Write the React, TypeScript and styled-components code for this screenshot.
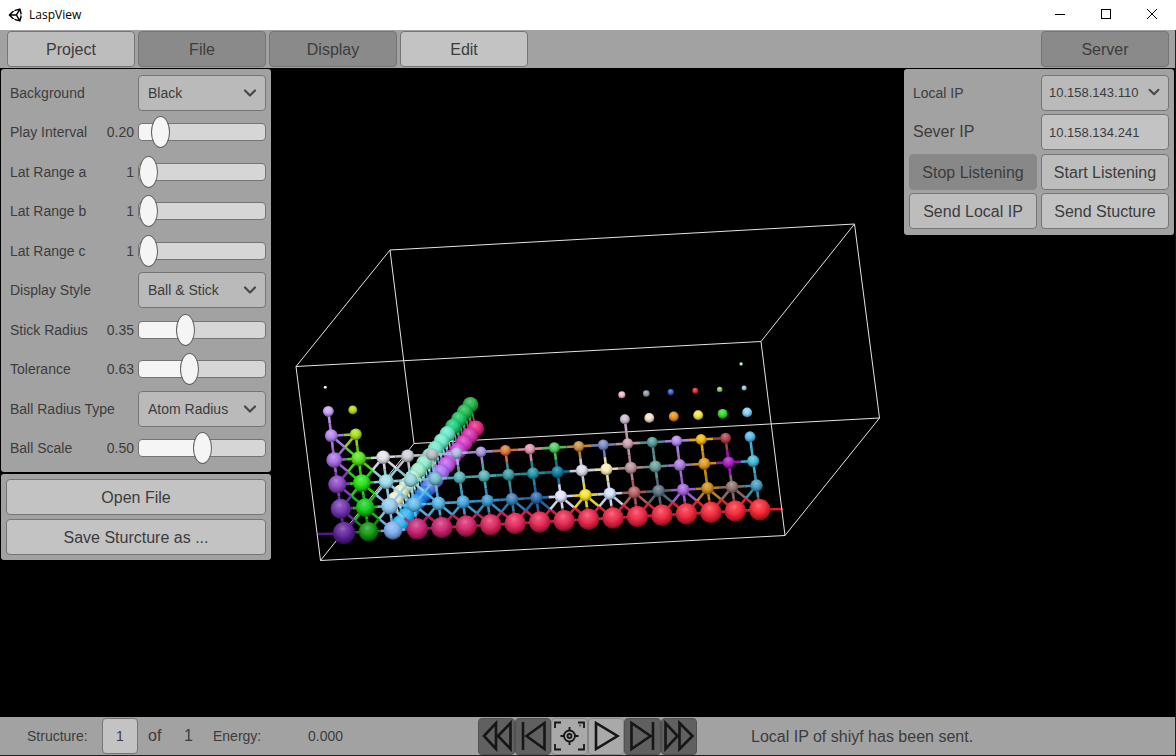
import React, { useId, useState } from "react";
import styled, { createGlobalStyle } from "styled-components";
import { ChevronDown } from "lucide-react";
import { FaUnity } from "react-icons/fa";

const GlobalStyle = createGlobalStyle`
  *, *::before, *::after { box-sizing: border-box; }
  body { margin: 0; background: #000; }
  button, input, select { font-family: inherit; color: inherit; margin: 0; }
`;

const Shell = styled.div`
  min-height: 100vh;
  display: grid;
  grid-template-rows: 30px 38px 1fr 39px;
  font-family: "Liberation Sans", Arial, sans-serif;
  font-size: 14px;
  color: #3c3c3c;
`;

/* ---------- window title bar ---------- */

const TitleBar = styled.header`
  display: flex;
  align-items: center;
  padding: 0 1px 0 8px;
  background: #fff;
  color: #000;
`;

const AppTitle = styled.h1`
  display: flex;
  align-items: center;
  gap: 5px;
  margin: 0;
  flex: 1;
  font: 400 12px/16px "Open Sans", "Noto Sans", sans-serif;
`;

const WindowButton = styled.button`
  width: 46px;
  height: 28px;
  padding: 0;
  border: 0;
  background: none;
  display: grid;
  place-items: center;
`;

/* ---------- shared controls ---------- */

type Tone = "normal" | "bright" | "dark" | "disabled";
const toneFill: Record<Tone, string> = {
  normal: "#bdbdbd",
  bright: "#c3c3c3",
  dark: "#8a8a8a",
  disabled: "#888888",
};

const Button = styled.button<{ $tone?: Tone }>`
  width: 100%;
  height: 36px;
  padding: 2px 0 0;
  border: 1px solid ${(p) => (p.$tone === "disabled" ? "#888888" : "#757575")};
  border-radius: 4px;
  background: ${(p) => toneFill[p.$tone ?? "normal"]};
  color: #3c3c3c;
  font-size: 16px;
  line-height: 20px;
  white-space: nowrap;
`;

const SelectBox = styled.div`
  position: relative;
  height: 36px;

  svg {
    position: absolute;
    top: 8px;
    right: 6px;
    pointer-events: none;
    color: #484848;
  }
`;

const Select = styled.select<{ $small?: boolean }>`
  appearance: none;
  width: 100%;
  height: 36px;
  padding: 0 ${(p) => (p.$small ? "20px 0 7px" : "24px 0 9px")};
  border: 1px solid #757575;
  border-radius: 4px;
  background: #bababa;
  font-size: ${(p) => (p.$small ? 13 : 14)}px;
`;

const TextInput = styled.input`
  width: 100%;
  height: 36px;
  padding: 0 7px;
  border: 1px solid #757575;
  border-radius: 4px;
  background: #c3c3c3;
  font-size: 13px;
`;

const Range = styled.input<{ $fill: number }>`
  appearance: none;
  display: block;
  width: 100%;
  height: 32px;
  background: none;

  &::-webkit-slider-runnable-track {
    height: 18px;
    border: 1px solid #757575;
    border-radius: 4px;
    background: linear-gradient(
      to right,
      #f5f5f5 ${(p) => p.$fill}%,
      #d6d6d6 ${(p) => p.$fill}%
    );
  }

  &::-webkit-slider-thumb {
    appearance: none;
    width: 19px;
    height: 32px;
    margin-top: -8px;
    border: 1px solid #606060;
    border-radius: 50%;
    background: #f5f5f5;
  }
`;

/* ---------- toolbar ---------- */

const Toolbar = styled.nav`
  display: flex;
  gap: 3px;
  padding: 1px 6px 1px 7px;
  background: #a2a2a2;
  border-right: 1px solid #222;
`;

const Tab = styled(Button)`
  width: 128px;

  &:last-child {
    margin-left: auto;
  }
`;

/* ---------- viewport and its panels ---------- */

const Viewport = styled.main`
  display: grid;
  grid-template-columns: minmax(0, 1fr);
  background: #000;
  border-right: 1px solid #111;
`;

const Scene = styled.svg`
  grid-area: 1 / 1;
  display: block;
  width: 100%;
  height: 100%;
`;

const Panels = styled.div`
  grid-area: 1 / 1;
  display: flex;
  justify-content: space-between;
  align-items: flex-start;
  padding: 1px 1px 0 1px;
`;

const PanelStack = styled.div`
  width: 270px;
  display: grid;
  gap: 2px;
`;

const Panel = styled.section`
  padding: 4px 5px;
  border-radius: 3px;
  background: #a2a2a2;
`;

const SettingList = styled.div`
  display: grid;
  grid-auto-rows: 1fr;
  min-height: 395px;
`;

const SettingRow = styled.div`
  display: grid;
  grid-template-columns: auto 1fr 128px;
  align-items: center;
  column-gap: 4px;
  padding-left: 4px;

  output {
    text-align: right;
  }
`;

const FileActions = styled(Panel)`
  display: grid;
  gap: 4px;
  padding: 5px;
`;

const ServerPanel = styled(Panel)`
  width: 270px;
  min-height: 166px;
  display: grid;
  grid-template-columns: 1fr 1fr;
  grid-auto-rows: 1fr;
  column-gap: 4px;
  align-items: center;
`;

const ServerLabel = styled.label<{ $large?: boolean }>`
  padding-left: 4px;
  font-size: ${(p) => (p.$large ? 16 : 14)}px;
`;

/* ---------- status bar ---------- */

const StatusBar = styled.footer`
  display: grid;
  grid-template-columns: 1fr 219px 1fr;
  align-items: center;
  background: #a2a2a2;
  border-right: 1px solid #222;
  border-bottom: 1px solid #222;
`;

const StructureInfo = styled.div`
  display: grid;
  grid-template-columns: 75px 36px 46px 29px 95px auto;
  align-items: center;
  padding-left: 27px;
`;

const FrameInput = styled(TextInput)`
  padding: 0;
  text-align: center;
  font-size: 14px;
`;

const FrameCount = styled.span<{ $indent?: boolean }>`
  padding-left: ${(p) => (p.$indent ? 10 : 0)}px;
  font-size: 16px;
`;

const Player = styled.div`
  display: grid;
  grid-template-columns: repeat(6, minmax(0, 1fr));
`;

const PlayerButton = styled.button<{ $active?: boolean }>`
  display: flex;
  align-items: center;
  justify-content: center;
  height: 37px;
  padding: 0;
  border: 1px solid ${(p) => (p.$active ? "#888" : "#525252")};
  border-radius: 4px;
  background: ${(p) => (p.$active ? "#a9a9a9" : "#606060")};

  svg {
    flex: none;
    fill: none;
    stroke: #161616;
  }
`;

const Message = styled.p`
  margin: 0;
  padding: 2px 0 0 54px;
  font-size: 16px;
`;

/* ---------- structure drawing ---------- */

type Atom = { x: number; y: number; r: number; c: string };

const ROW_START: [number, number][] = [
  [325.3, 387.3],
  [328.3, 411.3],
  [331.3, 435.7],
  [334.2, 460],
  [337.3, 484.3],
  [340.7, 508.8],
  [344, 533],
];

const sparse = (head: string[], tail: string[]) => [
  ...head,
  ...Array(18 - head.length - tail.length).fill(""),
  ...tail,
];

const ROW_COLORS: string[][] = [
  sparse(["#ffffff"], ["#b0f0f8"]),
  sparse(["#c8a2fc", "#bcd818"], ["#f0bccc", "#909fac", "#3860e4", "#ec2828", "#88d460", "#90cce8"]),
  sparse(["#b484f4", "#a8e018"], ["#ccbcd0", "#f4e0c8", "#f09014", "#f4e844", "#2ce020", "#84d0f4"]),
  ["#a86ce4", "#54e418", "#e4e4f0", "#ced0d8", "#b8b8c4", "#a8b8e4", "#aa94e0", "#e47834", "#e494ac", "#4cd060", "#d0903c", "#788ac8", "#cca0b0", "#549c9c", "#b48cf4", "#f4b808", "#b04048", "#54bcec"],
  ["#8844c4", "#20e410", "#9ce0ec", "#94d4e0", "#70c0d0", "#54b4b8", "#50b2b8", "#389ca4", "#2094a4", "#0880a0", "#d8dce8", "#fff0b8", "#bc9098", "#64a09c", "#a87cdc", "#e09818", "#a818c0", "#40bcdc"],
  ["#7030b0", "#10cc14", "#90ccf4", "#60bcf0", "#50b6e8", "#40a8e0", "#3898d0", "#3c80b8", "#286cb0", "#e4e4ff", "#fce428", "#d4e4ff", "#b86060", "#5c7080", "#a464e4", "#d08c18", "#90746f", "#409cc0"],
  ["#5c1c98", "#0c980c", "#7cb0f4", "#c81e72", "#cc1e6c", "#d42064", "#dc225c", "#e42258", "#e62250", "#e8224c", "#ec2248", "#ee2244", "#f02240", "#f0223c", "#f22238", "#f42234", "#f62232", "#f8222e"],
];

const ROW_RADII: number[][] = [
  [1.5, 1.7],
  [5.4, 4.4, 3.5],
  [6.4, 5.9, 4.9],
  [7.8, 7.3, 6.8, 6.4, 6.1, 5.7, 5.4],
  [9, 8.6, 7.4, 6.9, 6.5, 6.1, 6],
  [10, 9.2, 8.4, 7.2, 6.8, 6.6, 6.2],
  [11, 9.6, 9.2, 10.6],
];

const lattice: (Atom | null)[][] = ROW_COLORS.map((colors, row) =>
  colors.map((c, col) => {
    if (!c) return null;
    const radii = ROW_RADII[row];
    const shrink = row === 1 && col > 12 ? (col - 12) * 0.2 : 0;
    return {
      x: ROW_START[row][0] + col * 24.46,
      y: ROW_START[row][1] - col * 1.37,
      r: radii[Math.min(col, radii.length - 1)] - shrink,
      c,
    };
  })
);

const chain = (x: number, y: number, r: number, colors: string[]): Atom[] =>
  colors.map((c, i) => ({ x: x - i * 5.8, y: y + i * 7.3, r, c }));

const lanthanides = chain(470.5, 404.7, 7.8, [
  "#1cb03c", "#18b848", "#14c458", "#12cc70", "#60e8c4", "#6aeccc", "#6ae8c8",
  "#7ce8c4", "#84ecc8", "#98eccc", "#b4f4cc", "#d0f4cc", "#e8ecc8", "#f4ecc8",
]);
const actinides = chain(475.7, 428.7, 8.3, [
  "#e4207e", "#d428a8", "#d430bc", "#d038d4", "#cc40e4", "#c058e4", "#aa6af4",
  "#8e78f0", "#5870f0", "#1c78f8", "#1088f0", "#149cf0", "#14b0f4", "#18bcf4",
]);

type BondPair = [Atom, Atom];
const chainBonds: BondPair[] = [];
lanthanides.forEach((a, i) => {
  [i - 1, i, i + 1].forEach((j) => {
    if (actinides[j]) chainBonds.push([a, actinides[j]]);
  });
});

const latticeBonds: BondPair[] = [];
const link = (r1: number, c1: number, r2: number, c2: number) => {
  const a = lattice[r1]?.[c1];
  const b = lattice[r2]?.[c2];
  if (a && b) latticeBonds.push([a, b]);
};
for (let col = 0; col < 18; col++) {
  for (let row = 3; row < 7; row++) {
    if (!(row === 3 && col === 16)) link(row, col, row, col + 1);
    if (row < 6) link(row, col, row + 1, col);
    if (row === 5 || (row < 5 && col < (row === 4 ? 4 : 3))) {
      link(row, col, row + 1, col + 1);
      link(row, col + 1, row + 1, col);
    }
  }
}
link(1, 0, 2, 0);
link(2, 0, 2, 1);
link(2, 0, 3, 0);
link(2, 1, 3, 1);
link(2, 0, 3, 1);
link(2, 1, 3, 0);
link(2, 12, 3, 12);

function Bond({ pair: [a, b], width }: { pair: BondPair; width: number }) {
  const mx = (a.x + b.x) / 2;
  const my = (a.y + b.y) / 2;
  return (
    <g strokeWidth={width}>
      <line x1={a.x} y1={a.y} x2={mx} y2={my} stroke={a.c} />
      <line x1={mx} y1={my} x2={b.x} y2={b.y} stroke={b.c} />
    </g>
  );
}

function Ball({ x, y, r, c }: Atom) {
  return (
    <>
      <circle cx={x} cy={y} r={r} fill={c} />
      <circle cx={x} cy={y} r={r} fill="url(#shade)" />
      <circle cx={x} cy={y} r={r} fill="url(#shine)" />
    </>
  );
}

function StructureScene() {
  return (
    <Scene viewBox="0 68 1175 649" role="img" aria-label="Atomic structure">
      <defs>
        <radialGradient id="shine" cx="0.44" cy="0.3" r="0.5">
          <stop offset="0" stopColor="#fff" stopOpacity="0.34" />
          <stop offset="0.4" stopColor="#fff" stopOpacity="0.14" />
          <stop offset="1" stopColor="#fff" stopOpacity="0" />
        </radialGradient>
        <radialGradient id="shade" cx="0.46" cy="0.36" r="0.66">
          <stop offset="0.4" stopColor="#000" stopOpacity="0" />
          <stop offset="0.75" stopColor="#000" stopOpacity="0.2" />
          <stop offset="1" stopColor="#000" stopOpacity="0.6" />
        </radialGradient>
      </defs>
      <g stroke="#e4e4e4" strokeWidth="1" fill="none">
        <path d="M414 443.500L879.500 418L854.500 224L390 250Z" />
        <path d="M320.500 560.500L414 443.500M785 535.500L879.500 418M761 341.500L854.500 224M296 366.500L390 250" />
      </g>
      {chainBonds.map((pair, i) => <Bond key={i} pair={pair} width={1.8} />)}
      {actinides.map((a, i) => <Ball key={i} {...a} />)}
      {lanthanides.map((a, i) => <Ball key={i} {...a} />)}
      <line x1="318" y1="534" x2="344" y2="533.500" stroke="#54188c" strokeWidth="2.400" />
      <line x1="760" y1="509.500" x2="783" y2="509" stroke="#e01c2c" strokeWidth="2.400" />
      <g opacity="0.92">
        {latticeBonds.map((pair, i) => <Bond key={i} pair={pair} width={2.6} />)}
      </g>
      {lattice.flat().map((a, i) => a && <Ball key={i} {...a} />)}
      <path d="M320.500 560.500L785 535.500L761 341.500L296 366.500Z" stroke="#e4e4e4" strokeWidth="1" fill="none" />
    </Scene>
  );
}

/* ---------- settings ---------- */

type SliderProps = { label: string; min: number; max: number; step: number; initial: number };

function SliderSetting({ label, min, max, step, initial }: SliderProps) {
  const id = useId();
  const [value, setValue] = useState(initial);
  const text = step < 1 ? value.toFixed(2) : String(value);
  return (
    <SettingRow>
      <label htmlFor={id}>{label}</label>
      <output htmlFor={id}>{text}</output>
      <Range
        id={id}
        type="range"
        min={min}
        max={max}
        step={step}
        value={value}
        $fill={8 + ((value - min) / (max - min)) * 84}
        onChange={(e) => setValue(Number(e.target.value))}
      />
    </SettingRow>
  );
}

function Dropdown({ id, options, small }: { id: string; options: string[]; small?: boolean }) {
  return (
    <SelectBox>
      <Select id={id} $small={small}>
        {options.map((o) => <option key={o}>{o}</option>)}
      </Select>
      <ChevronDown size={small ? 18 : 20} strokeWidth={2.6} />
    </SelectBox>
  );
}

function SelectSetting({ label, options }: { label: string; options: string[] }) {
  const id = useId();
  return (
    <SettingRow>
      <label htmlFor={id}>{label}</label>
      <span />
      <Dropdown id={id} options={options} />
    </SettingRow>
  );
}

const tabs: [string, Tone][] = [
  ["Project", "normal"],
  ["File", "dark"],
  ["Display", "dark"],
  ["Edit", "bright"],
  ["Server", "dark"],
];

const playerButtons: { name: string; active?: boolean; icon: React.ReactNode }[] = [
  { name: "Fast backward", icon: <path d="M6 18L18 5V31ZM20 18L32.500 5V31Z" /> },
  { name: "Previous frame", icon: <path d="M8 4V32M11.500 18L29.500 5V31Z" /> },
  {
    name: "Center view",
    active: true,
    icon: (
      <g strokeWidth="1.800">
        <path d="M4 10V4.500H10M27 4.500H33V10M4 26V31.500H10M27 31.500H33V26" />
        <circle cx="18.500" cy="18" r="5.500" />
        <circle cx="18.500" cy="18" r="2" />
        <path d="M18.500 9V13M18.500 23V27M9.500 18H13.500M23.500 18H27.500M28.500 7.500H29.500" />
      </g>
    ),
  },
  { name: "Play", active: true, icon: <path d="M8 5V31L29.500 18Z" /> },
  { name: "Next frame", icon: <path d="M7.500 5V31L26.500 18ZM29 4V32" /> },
  { name: "Fast forward", icon: <path d="M4.500 5V31L16.500 18ZM18.500 5V31L31.500 18Z" /> },
];

export default function App() {
  return (
    <Shell>
      <GlobalStyle />
      <TitleBar>
        <AppTitle>
          <FaUnity size={16} />
          LaspView
        </AppTitle>
        <WindowButton aria-label="Minimize">
          <svg width="12" height="12" stroke="#000" fill="none"><path d="M1 5.500H11" /></svg>
        </WindowButton>
        <WindowButton aria-label="Maximize">
          <svg width="12" height="12" stroke="#000" fill="none"><rect x="1.500" y="0.500" width="9" height="9" /></svg>
        </WindowButton>
        <WindowButton aria-label="Close">
          <svg width="12" height="12" stroke="#000" fill="none"><path d="M1 0L11 10M11 0L1 10" /></svg>
        </WindowButton>
      </TitleBar>

      <Toolbar>
        {tabs.map(([name, tone]) => <Tab key={name} $tone={tone}>{name}</Tab>)}
      </Toolbar>

      <Viewport>
        <StructureScene />
        <Panels>
          <PanelStack>
            <Panel>
              <SettingList>
                <SelectSetting label="Background" options={["Black", "White"]} />
                <SliderSetting label="Play Interval" min={0.1} max={1} step={0.01} initial={0.2} />
                <SliderSetting label="Lat Range a" min={1} max={10} step={1} initial={1} />
                <SliderSetting label="Lat Range b" min={1} max={10} step={1} initial={1} />
                <SliderSetting label="Lat Range c" min={1} max={10} step={1} initial={1} />
                <SelectSetting label="Display Style" options={["Ball & Stick"]} />
                <SliderSetting label="Stick Radius" min={0} max={1} step={0.01} initial={0.35} />
                <SliderSetting label="Tolerance" min={0.25} max={1.25} step={0.01} initial={0.63} />
                <SelectSetting label="Ball Radius Type" options={["Atom Radius"]} />
                <SliderSetting label="Ball Scale" min={0} max={1} step={0.01} initial={0.5} />
              </SettingList>
            </Panel>
            <FileActions>
              <Button $tone="bright">Open File</Button>
              <Button $tone="bright">Save Sturcture as ...</Button>
            </FileActions>
          </PanelStack>

          <ServerPanel>
            <ServerLabel htmlFor="local-ip">Local IP</ServerLabel>
            <Dropdown id="local-ip" options={["10.158.143.110"]} small />
            <ServerLabel htmlFor="server-ip" $large>Sever IP</ServerLabel>
            <TextInput id="server-ip" defaultValue="10.158.134.241" />
            <Button $tone="disabled" disabled>Stop Listening</Button>
            <Button>Start Listening</Button>
            <Button>Send Local IP</Button>
            <Button $tone="bright">Send Stucture</Button>
          </ServerPanel>
        </Panels>
      </Viewport>

      <StatusBar>
        <StructureInfo>
          <label htmlFor="frame">Structure:</label>
          <FrameInput id="frame" defaultValue="1" />
          <FrameCount $indent>of</FrameCount>
          <FrameCount>1</FrameCount>
          <span>Energy:</span>
          <span>0.000</span>
        </StructureInfo>
        <Player>
          {playerButtons.map(({ name, active, icon }) => (
            <PlayerButton key={name} aria-label={name} $active={active}>
              <svg width="36" height="36" viewBox="0 0 36 36" strokeWidth="2.600">{icon}</svg>
            </PlayerButton>
          ))}
        </Player>
        <Message>Local IP of shiyf has been sent.</Message>
      </StatusBar>
    </Shell>
  );
}
